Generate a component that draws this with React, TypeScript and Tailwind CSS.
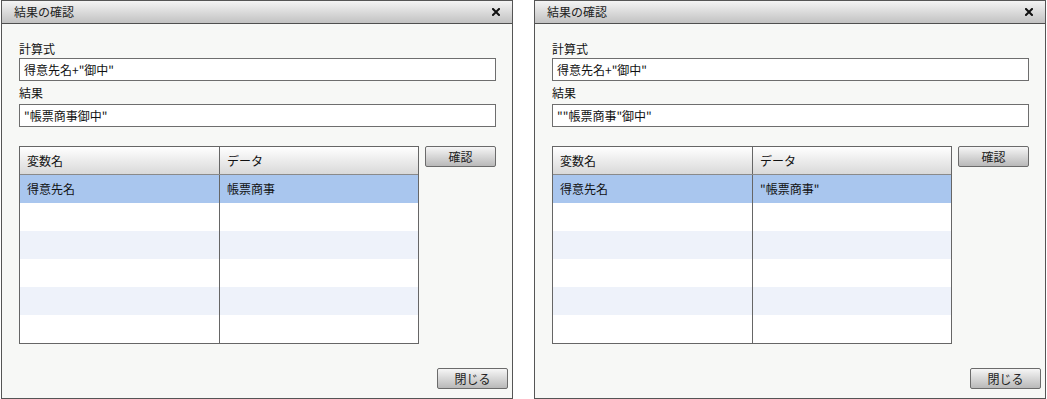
import React from "react";

const font = { fontFamily: '"Noto Sans CJK JP", "Liberation Sans", sans-serif' };

interface DialogProps {
    formula: string;
    result: string;
    rows: { name: string; data: string }[];
}

function CloseIcon() {
    return (
        <svg width="8" height="8" viewBox="0 0 8 8" className="block">
            <path d="M1 1 L7 7 M7 1 L1 7" stroke="#111" strokeWidth="2" strokeLinecap="square" />
        </svg>
    );
}

function GrayButton({ label, className = "" }: { label: string; className?: string }) {
    return (
        <button
            className={`h-[21px] w-[71px] rounded-[2px] border border-[#6b6b6b] bg-gradient-to-b from-[#f6f6f6] to-[#b9b9b9] text-[12px] leading-[19px] text-[#222] ${className}`}
        >
            {label}
        </button>
    );
}

function ResultDialog({ formula, result, rows }: DialogProps) {
    const blank = Array.from({ length: 6 - rows.length });
    return (
        <div className="flex h-[399px] w-[512px] flex-col border border-[#555] bg-[#f7f8f6]">
            <div className="flex h-[23px] shrink-0 items-center justify-between border-b border-[#4f4f4f] bg-gradient-to-b from-[#f4f4f4] to-[#c2c2c2] pl-[12px] pr-[12px]">
                <span className="text-[12px] text-[#222]">結果の確認</span>
                <CloseIcon />
            </div>

            <div className="flex flex-1 flex-col pl-[17px] pr-[16px] pt-[15px]">
                <div className="h-[19px] text-[12px] leading-[19px] text-[#111]">計算式</div>
                <div className="h-[23px] border border-[#6e6e6e] bg-white pl-[4px] text-[12px] leading-[21px] text-[#111]">
                    {formula}
                </div>
                <div className="h-[23px] pt-[2px] text-[12px] leading-[19px] text-[#111]">結果</div>
                <div className="h-[23px] border border-[#6e6e6e] bg-white pl-[4px] text-[12px] leading-[21px] text-[#111]">
                    {result}
                </div>

                <div className="mt-[19px] flex items-start gap-[6px]">
                    <div className="w-[400px] border border-[#666] bg-white text-[12px] text-[#111]">
                        <div className="flex h-[28px] border-b border-[#8a8a8a] bg-gradient-to-b from-white to-[#d9d9d9]">
                            <div className="w-[200px] border-r border-[#666] pl-[7px] leading-[27px]">変数名</div>
                            <div className="flex-1 pl-[7px] leading-[27px]">データ</div>
                        </div>
                        {rows.map((r, i) => (
                            <div key={i} className="flex h-[28px] bg-[#a9c6ee]">
                                <div className="w-[200px] border-r border-[#666] pl-[7px] leading-[28px]">{r.name}</div>
                                <div className="flex-1 pl-[7px] leading-[28px]">{r.data}</div>
                            </div>
                        ))}
                        {blank.map((_, i) => (
                            <div key={i} className={`flex h-[28px] ${i % 2 === 1 ? "bg-[#eef2fa]" : "bg-white"}`}>
                                <div className="w-[200px] border-r border-[#666]" />
                                <div className="flex-1" />
                            </div>
                        ))}
                    </div>
                    <GrayButton label="確認" />
                </div>

                <div className="mt-auto flex justify-end pb-[9px]">
                    <GrayButton label="閉じる" className="-mr-[12px]" />
                </div>
            </div>
        </div>
    );
}

export default function App() {
    return (
        <div className="flex h-[399px] w-[1047px] gap-[21px] bg-white pl-px" style={font}>
            <ResultDialog formula={'得意先名+"御中"'} result={'"帳票商事御中"'} rows={[{ name: "得意先名", data: "帳票商事" }]} />
            <ResultDialog formula={'得意先名+"御中"'} result={'""帳票商事"御中"'} rows={[{ name: "得意先名", data: '"帳票商事"' }]} />
        </div>
    );
}
